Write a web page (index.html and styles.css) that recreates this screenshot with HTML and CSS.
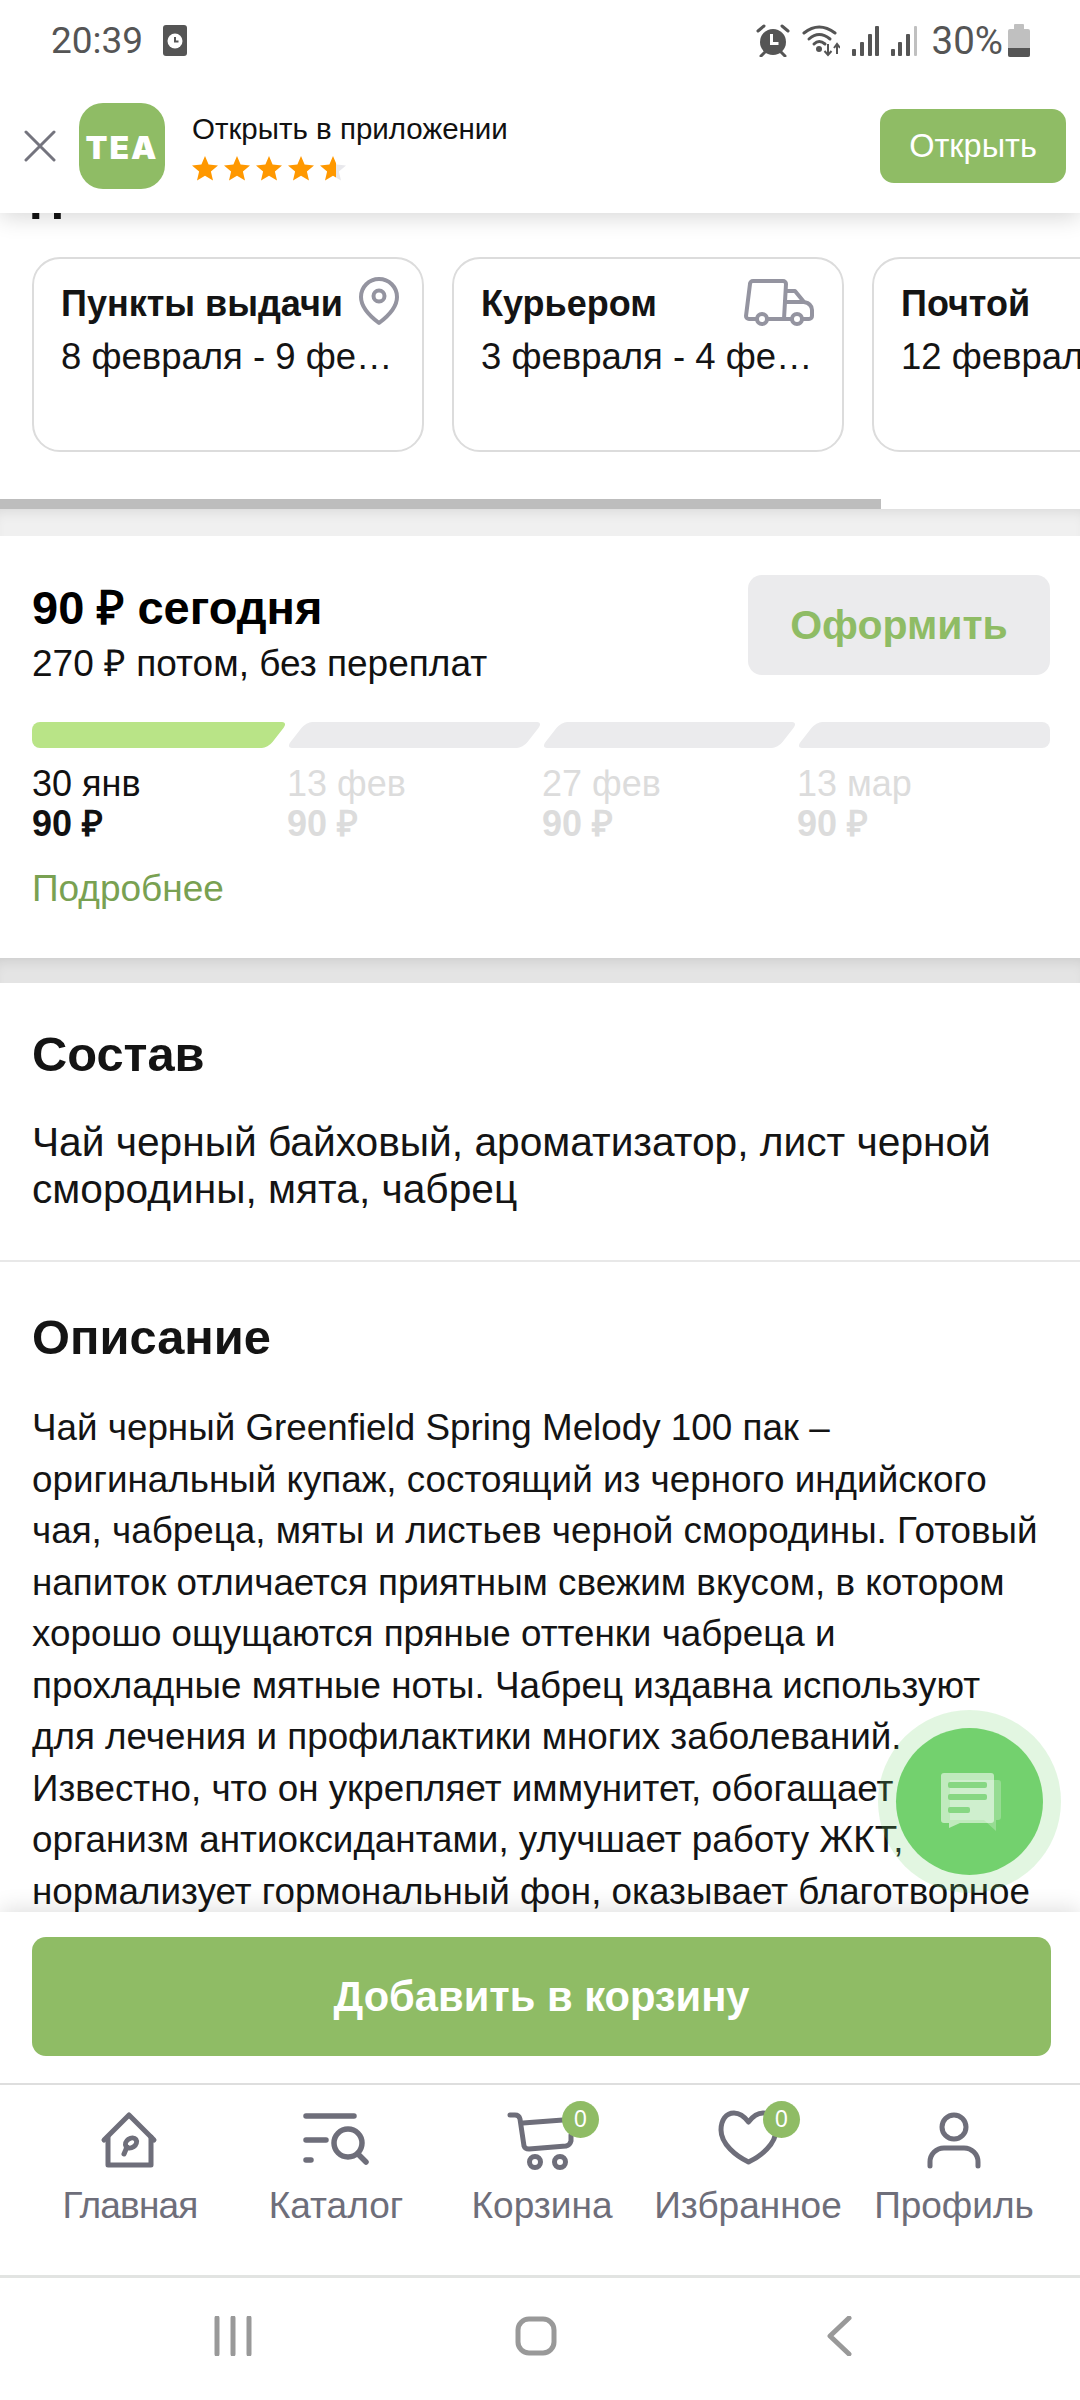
FILE: index.html
```html
<!DOCTYPE html>
<html lang="ru">

<head>
    <meta charset="UTF-8">
    <meta name="viewport" content="width=device-width, initial-scale=1.0">
    <title>Чай черный Greenfield Spring Melody</title>
    <link rel="stylesheet" href="styles.css">
</head>

<body>
    <svg class="defs" width="0" height="0">
        <defs>
            <path id="star" d="M13 0l3.6 8.6 9.4.8-7.1 6.1 2.1 9.1-8-4.8-8 4.8 2.1-9.1L0 9.400l9.400-.8z" />
            <linearGradient id="half-star">
                <stop offset="60%" stop-color="#ff9800" />
                <stop offset="60%" stop-color="#e8e8ec" />
            </linearGradient>
        </defs>
    </svg>

    <div class="phone">
        <div class="status-bar">
            <span class="status-time">20:39</span>
            <svg class="status-clock" width="24" height="31" viewBox="0 0 24 31">
                <rect width="24" height="31" rx="3" fill="#555" />
                <circle cx="12" cy="16" r="7.500" fill="#fff" />
                <path d="M12 12v4.500h3.500" fill="none" stroke="#555" stroke-width="2" />
            </svg>
            <div class="status-right">
                <svg width="34" height="33" viewBox="0 0 34 33">
                    <circle cx="17" cy="18" r="13" fill="#555" />
                    <path d="M15.500 10v9.500h7" fill="none" stroke="#fff" stroke-width="3" />
                    <path d="M2 7l6-5M32 7l-6-5M5 32l4-4M29 32l-4-4" stroke="#555" stroke-width="3" stroke-linecap="round" />
                </svg>
                <svg width="38" height="33" viewBox="0 0 38 33">
                    <g fill="none" stroke="#555" stroke-width="3" stroke-linecap="round">
                        <path d="M2 9Q17-3 33 9" />
                        <path d="M7 15Q17 6 28 15" />
                        <path d="M12 20Q17 15 23 20" />
                    </g>
                    <circle cx="17" cy="25" r="3" fill="#555" />
                    <path d="M26 20v10M22.500 27l3.500 4 3.500-4M35 30v-9M32 24l3-4 3 4" fill="none" stroke="#555" stroke-width="2" />
                </svg>
                <svg width="66" height="31" viewBox="0 0 66 31">
                    <g fill="#555">
                        <rect x="0" y="24" width="4" height="7" rx="1" />
                        <rect x="8" y="17" width="4" height="14" rx="1" />
                        <rect x="16" y="9" width="4" height="22" rx="1" />
                        <rect x="23" y="1" width="4" height="30" rx="1" />
                        <rect x="39" y="24" width="4" height="7" rx="1" />
                        <rect x="46" y="17" width="4" height="14" rx="1" />
                        <rect x="54" y="9" width="4" height="22" rx="1" />
                    </g>
                    <rect x="62" y="1" width="3" height="30" rx="1" fill="#c0c0c0" />
                </svg>
                <span class="status-battery-text">30%</span>
                <svg width="22" height="33" viewBox="0 0 22 33">
                    <rect x="6" y="0" width="10" height="6" rx="1" fill="#c0c0c0" />
                    <rect x="0" y="5" width="22" height="28" rx="2" fill="#c0c0c0" />
                    <path d="M0 24h22v7a2 2 0 0 1-2 2H2a2 2 0 0 1-2-2z" fill="#555" />
                </svg>
            </div>
        </div>

        <div class="app-banner">
            <svg class="banner-close" width="32" height="32" viewBox="0 0 32 32">
                <path d="M2 2l28 28M30 2L2 30" stroke="#74747e" stroke-width="3" stroke-linecap="round" />
            </svg>
            <div class="banner-logo">TEA</div>
            <div class="banner-text">
                <div class="banner-title">Открыть в приложении</div>
                <div class="banner-stars">
                    <svg width="26" height="25" viewBox="0 0 26 25"><use href="#star" fill="#ff9800" /></svg>
                    <svg width="26" height="25" viewBox="0 0 26 25"><use href="#star" fill="#ff9800" /></svg>
                    <svg width="26" height="25" viewBox="0 0 26 25"><use href="#star" fill="#ff9800" /></svg>
                    <svg width="26" height="25" viewBox="0 0 26 25"><use href="#star" fill="#ff9800" /></svg>
                    <svg width="26" height="25" viewBox="0 0 26 25"><use href="#star" fill="url(#half-star)" /></svg>
                </div>
            </div>
            <button class="banner-button">Открыть</button>
        </div>

        <main class="content">
            <section class="delivery">
                <!-- page is scrolled, only the foot of this heading shows under the banner -->
                <h2 class="delivery-title">П</h2>
                <div class="delivery-cards">
                    <div class="delivery-card">
                        <div class="delivery-head">
                            <h3>Пункты выдачи</h3>
                            <svg class="delivery-pin" width="44" height="50" viewBox="0 0 44 50">
                                <path d="M22 3C12 3 4 11 4 21c0 11 10 20 18 26 8-6 18-15 18-26C40 11 32 3 22 3z" fill="none" stroke="#9494a0" stroke-width="4" stroke-linejoin="round" />
                                <circle cx="22" cy="20" r="5.500" fill="none" stroke="#9494a0" stroke-width="4" />
                            </svg>
                        </div>
                        <p>8 февраля - 9 февраля</p>
                    </div>
                    <div class="delivery-card">
                        <div class="delivery-head">
                            <h3>Курьером</h3>
                            <svg class="delivery-truck" width="70" height="48" viewBox="0 0 70 48">
                                <g fill="none" stroke="#9494a0" stroke-width="4" stroke-linejoin="round">
                                    <path d="M13 40H5a3 3 0 0 1-3-3L6 5a3 3 0 0 1 3-3h30a3 3 0 0 1 3 3l-2 35H22" />
                                    <path d="M48 40h-8M41 12h10l9 11h-21M58 40h7a3 3 0 0 0 3-3v-6c0-4-3-7-8-8" />
                                    <circle cx="18" cy="40" r="5" />
                                    <circle cx="53" cy="40" r="5" />
                                </g>
                            </svg>
                        </div>
                        <p>3 февраля - 4 февраля</p>
                    </div>
                    <div class="delivery-card">
                        <div class="delivery-head">
                            <h3>Почтой</h3>
                        </div>
                        <p>12 февраля - 14 февраля</p>
                    </div>
                </div>
                <div class="delivery-scroll"></div>
            </section>

            <div class="band"></div>

            <section class="split">
                <div class="split-head">
                    <div>
                        <div class="split-today">90 ₽ сегодня</div>
                        <div class="split-later">270 ₽ потом, без переплат</div>
                    </div>
                    <button class="split-button">Оформить</button>
                </div>
                <div class="split-steps">
                    <div class="split-step active">
                        <div class="step-bar"></div>
                        <div class="step-date">30 янв</div>
                        <div class="step-sum">90 ₽</div>
                    </div>
                    <div class="split-step">
                        <div class="step-bar"></div>
                        <div class="step-date">13 фев</div>
                        <div class="step-sum">90 ₽</div>
                    </div>
                    <div class="split-step">
                        <div class="step-bar"></div>
                        <div class="step-date">27 фев</div>
                        <div class="step-sum">90 ₽</div>
                    </div>
                    <div class="split-step">
                        <div class="step-bar"></div>
                        <div class="step-date">13 мар</div>
                        <div class="step-sum">90 ₽</div>
                    </div>
                </div>
                <a class="split-more" href="#">Подробнее</a>
            </section>

            <div class="band band-dark"></div>

            <section class="composition">
                <h2>Состав</h2>
                <p>Чай черный байховый, ароматизатор, лист черной смородины, мята, чабрец</p>
            </section>

            <section class="description">
                <h2>Описание</h2>
                <p>Чай черный Greenfield Spring Melody 100 пак – оригинальный купаж, состоящий из черного индийского чая, чабреца, мяты и листьев черной смородины. Готовый напиток отличается приятным свежим вкусом, в котором хорошо ощущаются пряные оттенки чабреца и прохладные мятные ноты. Чабрец издавна используют для лечения и профилактики многих заболеваний. Известно, что он укрепляет иммунитет, обогащает организм антиоксидантами, улучшает работу ЖКТ, нормализует гормональный фон, оказывает благотворное</p>
            </section>

            <!-- chat button floats over the text -->
            <div class="chat-button">
                <div class="chat-inner">
                    <svg width="64" height="60" viewBox="0 0 64 60">
                        <path d="M12 8h48a3 3 0 0 1 3 3v34a3 3 0 0 1-3 3h-2v11L46 48H12z" fill="#fff" opacity=".25" />
                        <path d="M6 1h47a3 3 0 0 1 3 3v44a3 3 0 0 1-3 3H22L11 56v-5H6a3 3 0 0 1-3-3V4a3 3 0 0 1 3-3z" fill="#fff" opacity=".55" />
                        <g fill="#70d06a" opacity=".75">
                            <rect x="10" y="10" width="39" height="6" rx="2" />
                            <rect x="10" y="22" width="39" height="6" rx="2" />
                            <rect x="10" y="35" width="22" height="6" rx="2" />
                        </g>
                    </svg>
                </div>
            </div>
        </main>

        <div class="bottom">
            <div class="cart-bar">
                <button class="cart-button">Добавить в корзину</button>
            </div>

            <nav class="tabs">
                <a class="tab tab-home" href="#">
                    <span class="tab-icon">
                        <svg width="80" height="60" viewBox="0 0 80 60">
                            <g fill="none" stroke="#6e6e7a" stroke-width="5" stroke-linecap="round" stroke-linejoin="round">
                                <path d="M14 30L39 5l25 25" />
                                <path d="M18 27v28h43V27" />
                                <ellipse cx="41" cy="33" rx="6" ry="4.500" transform="rotate(-35 41 33)" />
                                <path d="M37 37l-3 7" />
                            </g>
                        </svg>
                    </span>
                    <span class="tab-label">Главная</span>
                </a>
                <a class="tab" href="#">
                    <span class="tab-icon">
                        <svg width="80" height="60" viewBox="0 0 80 60">
                            <g fill="none" stroke="#6e6e7a" stroke-width="5.500" stroke-linecap="round">
                                <path d="M10 6h48M10 30h20M10 50h5" />
                                <circle cx="52" cy="33" r="14" />
                                <path d="M62 44l8 8" />
                            </g>
                        </svg>
                    </span>
                    <span class="tab-label">Каталог</span>
                </a>
                <a class="tab" href="#">
                    <span class="tab-icon">
                        <svg width="80" height="60" viewBox="0 0 80 60">
                            <g fill="none" stroke="#6e6e7a" stroke-width="5" stroke-linecap="round" stroke-linejoin="round">
                                <path d="M8 5h5q4 0 5 4l4 27q1 3 5 3l37-3q4-1 5-5v-6" />
                                <path d="M21 13l40-3" />
                                <circle cx="33" cy="52" r="5.500" />
                                <circle cx="58" cy="52" r="5.500" />
                            </g>
                        </svg>
                    </span>
                    <span class="tab-badge cart-badge">0</span>
                    <span class="tab-label">Корзина</span>
                </a>
                <a class="tab" href="#">
                    <span class="tab-icon">
                        <svg width="80" height="60" viewBox="0 0 80 60">
                            <path d="M40.500 12C36 6 32 3 26 3 18 3 13 10 13 20c0 14 15 26 27.500 32C53 46 68 34 68 20 68 10 63 3 55 3c-6 0-10 3-14.500 9z" fill="none" stroke="#6e6e7a" stroke-width="5" stroke-linejoin="round" />
                        </svg>
                    </span>
                    <span class="tab-badge fav-badge">0</span>
                    <span class="tab-label">Избранное</span>
                </a>
                <a class="tab" href="#">
                    <span class="tab-icon">
                        <svg width="80" height="60" viewBox="0 0 80 60">
                            <g fill="none" stroke="#6e6e7a" stroke-width="5" stroke-linecap="round">
                                <circle cx="40" cy="17" r="12" />
                                <path d="M16 56v-4a14 14 0 0 1 14-14h20a14 14 0 0 1 14 14v4" />
                            </g>
                        </svg>
                    </span>
                    <span class="tab-label">Профиль</span>
                </a>
            </nav>

            <div class="system-nav">
                <svg width="38" height="40" viewBox="0 0 38 40">
                    <path d="M3 2v36M19 2v36M35 2v36" stroke="#999" stroke-width="5" stroke-linecap="round" />
                </svg>
                <svg width="42" height="40" viewBox="0 0 42 40">
                    <rect x="3" y="3" width="36" height="34" rx="11" fill="none" stroke="#999" stroke-width="5" />
                </svg>
                <svg width="26" height="40" viewBox="0 0 26 40">
                    <path d="M23 2L4 20l19 18" fill="none" stroke="#999" stroke-width="5" stroke-linecap="round" stroke-linejoin="round" />
                </svg>
            </div>
        </div>
    </div>
</body>

</html>
```
FILE: styles.css
```css
* {
    box-sizing: border-box;
}

body {
    font-family: "Liberation Sans", Arial, sans-serif;
    margin: 0;
    padding: 0;
    background-color: #fff;
    color: #141414;
}

h2,
h3,
p {
    margin: 0;
}

a {
    text-decoration: none;
}

.defs {
    position: absolute;
}

.phone {
    width: 1080px;
    height: 2400px;
    display: flex;
    flex-direction: column;
    overflow: hidden;
    background-color: #fff;
}

/* status bar */
.status-bar {
    height: 85px;
    flex: none;
    display: flex;
    align-items: center;
    padding: 0 50px 4px 51px;
    color: #555;
    font-family: Roboto, sans-serif;
    font-size: 37px;
    background-color: #fff;
    position: relative;
    z-index: 3;
}

.status-clock {
    margin-left: 20px;
}

.status-right {
    margin-left: auto;
    display: flex;
    align-items: center;
    gap: 12px;
}

.status-battery-text {
    margin: 0 -7px 0 2px;
    font-size: 38.500px;
}

/* open in app banner */
.app-banner {
    height: 128px;
    flex: none;
    display: flex;
    align-items: center;
    padding: 0 14px 6px 24px;
    background-color: #fff;
    box-shadow: 0 4px 22px rgba(0, 0, 0, 0.16);
    position: relative;
    z-index: 2;
}

.banner-logo {
    width: 86px;
    height: 86px;
    margin-left: 23px;
    border-radius: 24px;
    background-color: #8fbc65;
    color: #fff;
    font-family: Inter, sans-serif;
    font-size: 32px;
    font-weight: 900;
    letter-spacing: 2px;
    display: flex;
    align-items: center;
    justify-content: center;
    padding-top: 2px;
}

.banner-text {
    margin-left: 27px;
}

.banner-title {
    font-size: 29.500px;
    line-height: 36px;
    color: #111;
}

.banner-stars {
    display: flex;
    gap: 6px;
    margin-top: 9px;
}

.banner-button {
    margin-left: auto;
    width: 186px;
    height: 74px;
    border: none;
    border-radius: 14px;
    background-color: #8fbc65;
    color: #fff;
    font-family: inherit;
    font-size: 32.500px;
}

/* scrolled page */
.content {
    flex: 1;
    min-height: 0;
    overflow: hidden;
    position: relative;
}

.delivery-title {
    margin-top: -37px;
    padding-left: 29px;
    font-size: 48.800px;
    line-height: 52px;
}

.delivery-cards {
    display: flex;
    gap: 28px;
    margin-top: 29px;
    padding-left: 32px;
}

.delivery-card {
    flex: none;
    width: 392px;
    height: 195px;
    padding: 20px 24px 0 27px;
    border: 2px solid #dcdcdc;
    border-radius: 28px;
}

.delivery-head {
    display: flex;
    justify-content: space-between;
    height: 57px;
}

.delivery-head h3 {
    font-size: 36px;
    line-height: 42px;
    margin-top: 4px;
}

.delivery-pin {
    flex: none;
    margin-right: -3px;
    margin-top: -3px;
}

.delivery-truck {
    flex: none;
    margin-right: 4px;
    margin-top: 0;
}

.delivery-card p {
    font-size: 36.500px;
    line-height: 42px;
    white-space: nowrap;
    overflow: hidden;
    text-overflow: ellipsis;
}

.delivery-scroll {
    width: 881px;
    height: 10px;
    margin-top: 47px;
    background-color: #bdbdbd;
}

.band {
    height: 27px;
    background-color: #f0f0f0;
    box-shadow: inset 0 10px 14px -8px rgba(0, 0, 0, 0.1);
}

.band-dark {
    height: 25px;
    background-color: #e4e4e4;
    box-shadow: inset 0 10px 14px -8px rgba(0, 0, 0, 0.12);
}

/* pay in parts */
.split {
    height: 422px;
    padding: 39px 30px 0 32px;
}

.split-head {
    display: flex;
    justify-content: space-between;
}

.split-today {
    font-size: 47px;
    font-weight: bold;
    line-height: 52px;
    color: #000;
    margin-top: 7px;
}

.split-later {
    font-size: 37px;
    line-height: 44px;
    color: #111;
    margin-top: 8px;
}

.split-button {
    width: 302px;
    height: 100px;
    border: none;
    border-radius: 14px;
    background-color: #ebebed;
    color: #8fbc65;
    font-family: inherit;
    font-size: 41px;
    font-weight: bold;
}

.split-steps {
    display: grid;
    grid-template-columns: repeat(4, 1fr);
    gap: 2px;
    margin-top: 36px;
}

.split-step {
    color: #dcdcdc;
}

.split-step.active {
    color: #111;
}

.step-bar {
    height: 26px;
    position: relative;
    overflow: hidden;
}

.step-bar::before {
    content: "";
    position: absolute;
    top: 0;
    bottom: 0;
    left: 9px;
    right: 7px;
    border-radius: 6px;
    background-color: #ebebed;
    transform: skewX(-38deg);
}

.split-step:first-child .step-bar {
    border-radius: 8px 0 0 8px;
}

.split-step:first-child .step-bar::before {
    left: -30px;
}

.split-step:last-child .step-bar {
    border-radius: 0 8px 8px 0;
}

.split-step:last-child .step-bar::before {
    right: -30px;
}

.split-step.active .step-bar::before {
    background-color: #b9e487;
}

.step-date {
    font-size: 36px;
    line-height: 40px;
    margin-top: 16px;
}

.step-sum {
    font-size: 36px;
    font-weight: bold;
    line-height: 40px;
}

.split-more {
    display: block;
    margin-top: 25px;
    font-size: 37px;
    line-height: 40px;
    color: #79a152;
}

/* text sections */
.composition {
    height: 279px;
    padding: 46px 32px 0;
    border-bottom: 2px solid #e8e8e8;
}

.composition h2,
.description h2 {
    font-size: 48.800px;
    line-height: 50px;
}

.composition p {
    margin-top: 40px;
    font-size: 40.700px;
    line-height: 47px;
}

.description {
    padding: 50px 32px 0;
}

.description p {
    margin-top: 40px;
    font-size: 36.800px;
    line-height: 51.500px;
}

/* floating chat */
.chat-button {
    position: absolute;
    top: 1497px;
    right: 19px;
    width: 183px;
    height: 183px;
    border-radius: 50%;
    background-color: rgba(112, 208, 106, 0.2);
    display: flex;
    align-items: center;
    justify-content: center;
}

.chat-inner {
    width: 147px;
    height: 147px;
    border-radius: 50%;
    background-color: rgba(112, 208, 106, 0.97);
    display: flex;
    align-items: center;
    justify-content: center;
}

/* bottom bars */
.bottom {
    height: 488px;
    flex: none;
    background-color: #fff;
    box-shadow: 0 -4px 20px rgba(0, 0, 0, 0.12);
    position: relative;
    z-index: 1;
}

.cart-bar {
    padding: 25px 29px 27px 32px;
    border-bottom: 2px solid #dedede;
}

.cart-button {
    display: block;
    width: 100%;
    height: 119px;
    border: none;
    border-radius: 14px;
    background-color: #8fbc65;
    color: #fff;
    font-family: inherit;
    font-size: 41.700px;
    font-weight: bold;
}

.tabs {
    height: 193px;
    display: grid;
    grid-template-columns: repeat(5, 206px);
    padding: 25px 0 0 27px;
    border-bottom: 3px solid #e2e4e2;
}

.tab {
    position: relative;
    display: flex;
    flex-direction: column;
    align-items: center;
    color: #6e6e7a;
}

.tab-icon {
    height: 60px;
}

.tab-label {
    margin-top: 16px;
    font-size: 37px;
    line-height: 40px;
    white-space: nowrap;
}

.tab-home .tab-label {
    letter-spacing: -0.8px;
}

.tab-badge {
    position: absolute;
    top: -9px;
    width: 37px;
    height: 37px;
    border-radius: 50%;
    background-color: #8fbc65;
    color: #fff;
    font-size: 23px;
    line-height: 37px;
    text-align: center;
}

.cart-badge {
    left: 123px;
}

.fav-badge {
    left: 118px;
}

.system-nav {
    display: grid;
    grid-template-columns: repeat(3, 303px);
    justify-items: center;
    padding: 38px 81px 0;
}
```
